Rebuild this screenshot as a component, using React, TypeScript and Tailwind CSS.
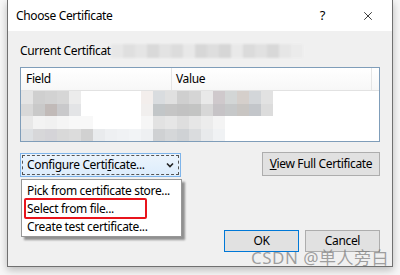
import { X } from 'lucide-react'

const font = { fontFamily: '"Noto Sans", "Noto Sans CJK SC", sans-serif' }

// blurred-out certificate data
const rows = [
  ['#e4e4e4', '#cfcfcf', '#d2d2d2', '#d6d6d6', '#ececec', '', '', '', '', '', '#f3eeec', '#d9dcdf', '#e0e0e0', '#cfcfcf', '#d5d5d5', '#e9e9e9', '#cfc9cc', '#d3d6d6', '#d5cfcb', '#d3d6d9', '#e2e2e2'],
  ['#d8d8d8', '#c9c9c9', '#c1bab8', '#c9c9cb', '#e3e4e6', '', '', '', '', '', '#f1efee', '#c2c6c8', '#c5c5c5', '#c2c2c2', '#c3c4c3', '#d7d7d7', '#c6c3c6', '#c6c8c9', '#c8c5c2', '#c3c6ca', '#dcdcdc'],
  ['#e8e8e8', '#f3f3f3', '#f1f1f1', '#f5f5f5', '#f8f8f8', '#f8f8f8', '', '', '', '', '#f6f6f6', '#e2e2e2', '#e6e6e6', '#dedede', '#e6e6e6', '#ececec', '#f4f4f4', '', '', '', ''],
  ['#dde0e3', '#d7d7d9', '#d5d4d8', '#d9d9d9', '#dcdcdc', '#d1d1d1', '#e9ebed', '#eef0f2', '#f0f2f4', '#f2f4f6', '#eef0f2', '#cfd1d3', '#d5d7d9', '#cfd2d5', '#dadcde', '#e8eaec', '#f0f2f4', '', '', '', ''],
]

const certBlur = ['#e6e6e6', '#dcdcdc', '#e3e3e3', '#d4d4d4', '#e0e0e0', '#d8d8d8', '#e7e7e7', '#d2d2d2', '#dadada', '#d0d0d0', '#e8e8e8', '#d6d6d6', '#dedede', '#d3d3d3', '#e4e4e4', '#ebebeb']

export default function App() {
  return (
    <div className="w-[400px] h-[275px] bg-[#f7f7f7] overflow-hidden" style={font}>
      <div className="relative ml-[7px] w-[386px] h-[267px] border-x border-b border-[#707070] bg-[#f0f0f0] shadow-[0_3px_8px_rgba(0,0,0,0.25)] text-[12px] tracking-[-0.35px] text-black">
        {/* Title bar */}
        <div className="h-[31px] bg-white flex items-center pl-[8px]">
          <span className="text-[12px]">Choose Certificate</span>
          <span className="ml-auto mr-[36px] text-[13px]">?</span>
          <X className="w-[14px] h-[14px] mr-[17px]" strokeWidth={1.3} />
        </div>

        <div className="px-[12px] pt-[13px]">
          <div className="flex items-center h-[14px] leading-none">
            <span>Current Certificat</span>
            <div className="flex h-[14px] blur-[1.2px] opacity-80">
              {certBlur.map((c, i) => (
                <div key={i} className="w-[12px]" style={{ background: c }} />
              ))}
            </div>
          </div>

          {/* Table */}
          <div className="mt-[9px] h-[75px] border border-[#7f9db9] bg-white overflow-hidden">
            <div className="flex h-[23px] bg-gradient-to-b from-white to-[#f7f7f7] border-b border-[#e2e2e2]">
              <div className="w-[151px] pl-[5px] flex items-center border-r border-[#e5e5e5]">Field</div>
              <div className="w-[200px] pl-[4px] flex items-center border-r border-[#e5e5e5]">Value</div>
            </div>
            <div className="blur-[0.6px]">
              {rows.map((r, i) => (
                <div key={i} className="flex h-[12.5px]">
                  {r.map((c, j) => (
                    <div key={j} className="w-[12px] shrink-0" style={{ background: c || 'transparent' }} />
                  ))}
                </div>
              ))}
            </div>
          </div>

          {/* Buttons row */}
          <div className="mt-[11px] flex items-start">
            <div className="w-[161px] h-[24px] border border-[#7eb4ea] bg-gradient-to-b from-[#ecf4fc] to-[#dcecfc] p-[1px]">
              <div className="h-full border border-dashed border-[#555] flex items-center pl-[4px] pr-[4px]">
                <span>Configure Certi<span className="underline">f</span>icate...</span>
                <svg className="ml-auto w-[8px] h-[6px]" viewBox="0 0 8 6">
                  <path d="M1 1.5 L4 4.5 L7 1.5" fill="none" stroke="#222" strokeWidth="1.6" />
                </svg>
              </div>
            </div>
            <button className="ml-auto mt-[-1px] w-[118px] h-[24px] border border-[#adadad] bg-[#e1e1e1]">
              <span className="underline">V</span>iew Full Certificate
            </button>
          </div>

          <div className="mt-[53px] flex justify-end gap-[6px]">
            <button className="w-[75px] h-[22px] border border-[#0078d7] bg-[#e1e1e1]">OK</button>
            <button className="w-[75px] h-[22px] border border-[#adadad] bg-[#e1e1e1]">Cancel</button>
          </div>
        </div>

        {/* Dropdown menu */}
        <div className="absolute left-[13px] top-[179px] w-[161px] h-[58px] bg-white border border-[#979797] shadow-[3px_3px_2px_rgba(0,0,0,0.4)] pt-[2px] flex flex-col">
          <div className="h-[19px] pl-[5px] flex items-center">Pick from certificate store...</div>
          <div className="h-[19px] pl-[5px] flex items-center">Select from file...</div>
          <div className="h-[19px] pl-[5px] flex items-center">Create test certificate...</div>
        </div>
        <div className="absolute left-[16px] top-[198px] w-[123px] h-[21px] border-2 border-[#e8141c] rounded-[2px]" />

        {/* Watermark */}
        <div className="absolute left-[243px] top-[245px] text-[17px] text-[#7a7a7a]/70 tracking-[0.5px] whitespace-nowrap">
          CSDN @单人旁白
        </div>
      </div>
    </div>
  )
}
